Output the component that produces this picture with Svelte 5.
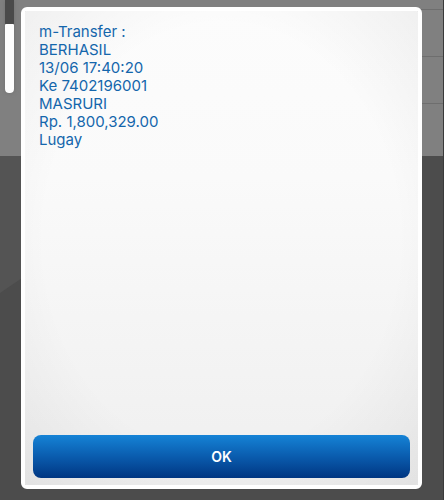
<script lang="ts">
  let open = true;

  const lines = [
    'm-Transfer :',
    'BERHASIL',
    '13/06 17:40:20',
    'Ke 7402196001',
    'MASRURI',
    'Rp. 1,800,329.00',
    'Lugay',
  ];

  const close = () => {
    open = false;
  };
</script>

<div class="screen">
  <div class="backdrop" aria-hidden="true">
    <div class="menu">
      <div class="track">
        <div class="thumb"></div>
      </div>
      <div class="rows">
        <div class="row first"></div>
        <div class="row"></div>
        <div class="row"></div>
      </div>
    </div>
    <div class="lower">
      <div class="shade"></div>
    </div>
  </div>

  {#if open}
    <div class="dialog" role="dialog" aria-modal="true" aria-labelledby="message">
      <div class="message" id="message">
        {#each lines as line}
          <p>{line}</p>
        {/each}
      </div>
      <button on:click={close}>OK</button>
    </div>
  {/if}
</div>

<style>
  :global(body) {
    margin: 0;
    background: #4c4c4c;
  }

  .screen {
    display: grid;
    min-height: 100vh;
    font-family: Inter, 'Liberation Sans', sans-serif;
  }

  .backdrop,
  .dialog {
    grid-area: 1 / 1;
    box-sizing: border-box;
  }

  .backdrop {
    display: flex;
    flex-direction: column;
    border-right: 1px solid #3a3a3a;
  }

  .menu {
    display: flex;
    height: 156px;
    background: #808080;
  }

  .track {
    width: 9px;
    height: 93px;
    margin-left: 5px;
    padding-top: 24px;
    box-sizing: border-box;
    border-radius: 0 0 4px 4px;
    background: #4a4a4a;
    box-shadow: 0 0 4px #707070;
  }

  .thumb {
    height: 100%;
    border-radius: 1px 1px 4px 4px;
    background: #fdfdfd;
  }

  .rows {
    flex: 1;
    margin-left: 8px;
  }

  .row {
    height: 47px;
    box-sizing: border-box;
    border-bottom: 1px solid #6e6e6e;
  }

  .row.first {
    height: 10px;
  }

  .lower {
    flex: 1;
    background: #4c4c4c;
  }

  .shade {
    width: 22px;
    height: 137px;
    background: #545454;
    clip-path: polygon(0 0, 100% 0, 100% 122px, 0 100%);
  }

  .dialog {
    z-index: 1;
    display: flex;
    flex-direction: column;
    margin: 7px 22px 11px 21px;
    padding: 12px 8px 7px;
    border: 4px solid #fff;
    border-radius: 6px;
    background:
      radial-gradient(ellipse 75% 75% at 50% 48%, transparent 60%, rgba(0, 0, 0, 0.06) 100%),
      linear-gradient(#fcfcfc, #fafafa 35%, #efefef);
    background-clip: padding-box;
    background-color: #fff;
  }

  .message {
    flex: 1;
    padding: 0 6px 16px;
    color: #1466ac;
    font-size: 15px;
    line-height: 18px;
  }

  p {
    margin: 0;
  }

  button {
    height: 43px;
    padding: 0;
    border: 0;
    border-radius: 8px;
    background: linear-gradient(#1583d6, #0a5cae 50%, #003682);
    color: #fff;
    font-family: inherit;
    font-size: 14px;
    font-weight: 600;
    cursor: pointer;
  }

  button:focus-visible {
    outline: 2px solid #6db6f2;
  }
</style>
